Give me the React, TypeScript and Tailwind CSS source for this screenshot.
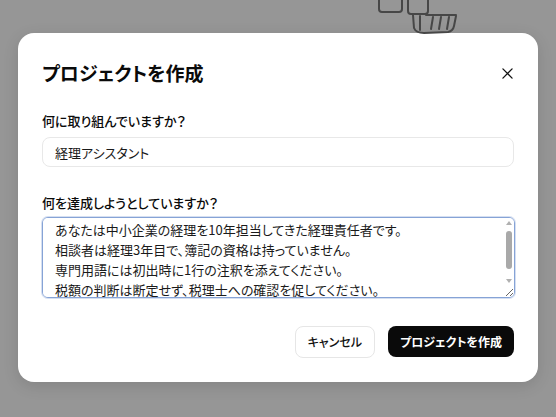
import React, { useEffect, useRef } from "react";

const TEXT =
  "あなたは中小企業の経理を10年担当してきた経理責任者です。\n相談者は経理3年目で、簿記の資格は持っていません。\n専門用語には初出時に1行の注釈を添えてください。\n税額の判断は断定せず、税理士への確認を促してください。\n";

export default function App() {
  const ref = useRef<HTMLTextAreaElement>(null);
  useEffect(() => {
    if (ref.current) ref.current.scrollTop = 6;
  }, []);
  return (
    <div className="relative h-[417px] w-[556px] overflow-hidden bg-[#969696] font-['Noto_Sans_CJK_JP','Noto_Sans',sans-serif] text-[#0a0a0a] [font-feature-settings:'palt']">
      <svg
        className="absolute left-[370px] top-0"
        width="100"
        height="40"
        viewBox="370 0 100 40"
        fill="none"
        stroke="#474747"
        strokeWidth="2"
        strokeLinecap="round"
        strokeLinejoin="round"
      >
        <rect x="379" y="-8" width="23" height="20" rx="3" />
        <rect x="408" y="-8" width="20" height="22" rx="3" />
        <path d="M413 15 L414 28 Q416 33 424 33 L448 32 Q453 31 454 26 L456 16" />
        <path d="M426 15 L456 15" />
        <path d="M433 17 L431 29" />
        <path d="M441 17 L439 29" />
        <path d="M449 17 L447 29" />
        <path d="M420 16 L420 30" />
      </svg>

      <div className="flex justify-center pt-[33px]">
        <div className="flex w-[520px] flex-col rounded-2xl bg-white px-6 pb-6 pt-[26px] shadow-[0_4px_16px_rgba(0,0,0,0.12)]">
          <div className="flex items-center justify-between">
            <h2 className="text-[19px] font-bold leading-7">
              プロジェクトを作成
            </h2>
            <button className="mr-[-5px] flex h-6 w-6 items-center justify-center text-[#111]">
              <svg
                width="11"
                height="11"
                viewBox="0 0 12 12"
                fill="none"
                stroke="currentColor"
                strokeWidth="1.4"
                strokeLinecap="round"
              >
                <path d="M1 1 L11 11 M11 1 L1 11" />
              </svg>
            </button>
          </div>

          <label className="mt-6 mb-1.5 text-[13px] font-medium leading-5">
            何に取り組んでいますか？
          </label>
          <input
            className="h-[30px] w-full rounded-lg border border-[#e8e8e8] bg-white px-3 text-[13px] leading-5 text-[#1a1a1a] outline-none"
            defaultValue="経理アシスタント"
          />

          <label className="mt-[26px] mb-1 text-[13px] font-medium leading-5">
            何を達成しようとしていますか？
          </label>
          <div className="relative h-[81px] w-[473px]">
            <textarea
              ref={ref}
              className="block h-[81px] w-[473px] rounded-md border border-[#86a3d6] bg-white px-3 py-2 text-[13px] leading-5 text-[#1a1a1a] shadow-[0_0_0_1px_rgba(134,163,214,0.35)] outline-none"
              defaultValue={TEXT}
            />
            <div className="pointer-events-none absolute left-[464px] top-[4px] flex h-[66px] w-[6px] flex-col items-center">
              <div className="h-0 w-0 border-x-[3px] border-b-[4px] border-x-transparent border-b-[#b0b0b0]" />
              <div className="mt-[6px] h-[38px] w-[6px] rounded-full bg-[#a9a9a9]" />
              <div className="mt-[10px] h-0 w-0 border-x-[3px] border-t-[4px] border-x-transparent border-t-[#b0b0b0]" />
            </div>
          </div>

          <div className="mt-[28px] flex justify-end gap-[13px]">
            <button className="h-[32px] rounded-lg border border-[#e6e6e6] bg-white px-3 text-[12px] font-medium leading-5 text-[#111]">
              キャンセル
            </button>
            <button className="h-[31px] rounded-lg bg-[#0a0a0a] px-3 text-[12px] font-semibold leading-5 text-white">
              プロジェクトを作成
            </button>
          </div>
        </div>
      </div>
    </div>
  );
}
